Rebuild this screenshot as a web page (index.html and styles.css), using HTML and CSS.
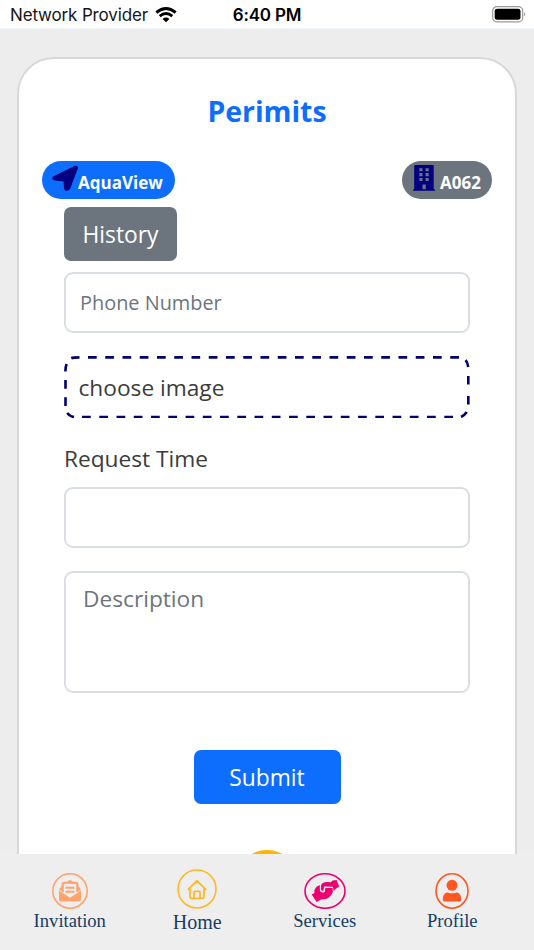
FILE: index.html
```html
<!DOCTYPE html>
<html lang="en">
<head>
<meta charset="utf-8">
<title>Perimits</title>
<link rel="stylesheet" href="styles.css">
</head>
<body>
<div class="screen">
  <header class="status">
    <div class="carrier"><span>Network Provider</span>
      <svg class="wifi" width="22" height="16" viewBox="0 0 22 16"><g fill="none" stroke="#000" stroke-width="2.9"><path d="M1.3 5.5Q11-2.3 20.7 5.5"/><path d="M4.7 9.1Q11 3.9 17.3 9.1"/></g><path d="M7.6 12Q11 9.2 14.4 12L11 15.3Z"/></svg>
    </div>
    <div class="clock">6:40 PM</div>
    <svg class="battery" width="34" height="17" viewBox="0 0 34 17"><rect x=".7" y=".7" width="30" height="15.2" rx="4.2" fill="none" stroke="#999" stroke-width="1.2"/><rect x="2.7" y="2.8" width="25.8" height="11" rx="2.4"/><path d="M32.1 6Q34.4 8.3 32.1 10.6Z" fill="#999"/></svg>
  </header>
  <main class="content">
    <section class="card">
      <h1>Perimits</h1>
      <div class="badges">
        <div class="badge blue">
          <svg width="26" height="27" viewBox="0 0 26 27"><path d="M23 .8C25 .1 26.6 1.7 25.8 3.6L18.2 23.6C17.2 26.6 12.4 26.4 12 23.4L11.6 16.5 3 15.5C-.3 15-.6 12.3 2 11Z" fill="#020080"/></svg>
          <span>AquaView</span>
        </div>
        <div class="badge gray">
          <svg width="22" height="26" viewBox="0 0 22 26"><path fill="#020080" fill-rule="evenodd" d="M1.2.8Q1.2 0 2 0H19.8Q20.7 0 20.7.8V24.3H21.3Q22 24.3 22 25V25.8H0V25Q0 24.3.8 24.3H1.2ZM6.4 3.2V6.3H9.5V3.2ZM12.6 3.2V6.3H15.7V3.2ZM6.4 8.1V11.2H9.5V8.1ZM12.6 8.1V11.2H15.7V8.1ZM6.4 13V16.1H9.5V13ZM12.6 13V16.1H15.7V13ZM9.5 19.5V24.3H12.8V19.5Z"/></svg>
          <span>A062</span>
        </div>
      </div>
      <form class="form">
        <button type="button" class="btn history">History</button>
        <div class="field phone">Phone Number</div>
        <div class="upload">
          <svg width="406" height="62" viewBox="0 0 406 62"><g fill="none" stroke="#020070" stroke-width="2.6"><path d="M7.3 2.2Q9 1.4 15.5 1.4M24 1.4H395" stroke-dasharray="8.7 8.55"/><path d="M401.6 4.2Q403.6 6.5 404.2 11"/><path d="M404.3 20V28.6M404.3 40V48.6M402.8 56Q400.4 59.4 397 61"/><path d="M389 61.1H17" stroke-dasharray="8.7 8.55"/><path d="M10 61.1Q5.5 60.3 3.2 57M1.5 50V41.3M1.5 32.7V24M1.5 15.5Q1.2 12 2.6 8"/></g></svg>
          <span>choose image</span>
        </div>
        <div class="label">Request Time</div>
        <div class="field time"></div>
        <div class="field description">Description</div>
        <button type="button" class="btn submit">Submit</button>
      </form>
      <div class="disc"></div>
    </section>
  </main>
  <nav class="tabs">
    <div class="tab">
      <svg width="36" height="36" viewBox="0 0 36 36"><circle cx="18" cy="18" r="17.2" fill="none" stroke="#ffa36b" stroke-width="1.6"/><path fill="#ffa36b" d="M7 17.6L18 24.8 29 17.6V26.5Q29 28.5 27 28.5H9Q7 28.5 7 26.5ZM7 16.4L10 12.8V18.2ZM29 16.4L26 12.8V18.2Z"/><path d="M10.7 19V11.2Q10.7 9.7 12.2 9.7H23.8Q25.3 9.7 25.3 11.2V19M13.6 14.8H22.4M13.6 18.8H22.4" fill="none" stroke="#ffa36b" stroke-width="2.1"/><path d="M13.6 10.2L17 7.3H19L22.4 10.2Z" fill="#ffa36b"/></svg>
      <span>Invitation</span>
    </div>
    <div class="tab home">
      <svg width="40" height="40" viewBox="0 0 40 40"><circle cx="20" cy="20" r="19" fill="none" stroke="#ffb827" stroke-width="1.6"/><path d="M10.7 20.8L20 11.8 29.3 20.8M13 19V28Q13 29.3 14.3 29.3H25.7Q27 29.3 27 28V19M17 29V23.3Q17 22.3 18 22.3H22Q23 22.3 23 23.3V29" fill="none" stroke="#ffb827" stroke-width="1.8"/></svg>
      <span>Home</span>
    </div>
    <div class="tab">
      <svg width="42" height="36" viewBox="0 0 42 36"><ellipse cx="21" cy="18" rx="20" ry="17.2" fill="none" stroke="#ed006d" stroke-width="1.6"/><path fill="#ed006d" d="M7.7 21.5L10.4 20V17Q12 13.2 15.8 12L15.9 17.8Q17.4 20.6 20.8 19L21.3 15H28.6L28.8 19 27.2 22 25 24.6 22 26 17 26.4 12.6 28.9Z"/><path fill="#ed006d" d="M17 12Q18 9.6 21.7 9L27 9.2 28.5 7.6 32.6 7 35.2 13.6 31.8 15.8 29.5 18 29 13.8 20 13.6 19.5 17.4Q17.4 18.4 17 16.7Z"/></svg>
      <span>Services</span>
    </div>
    <div class="tab">
      <svg width="34" height="36" viewBox="0 0 34 36"><ellipse cx="17" cy="18" rx="16" ry="17.2" fill="none" stroke="#ff5722" stroke-width="1.6"/><circle cx="17" cy="12.3" r="5.5" fill="#ff5722"/><path fill="#ff5722" d="M7.8 26.4C7.8 21.8 10 19.4 12.8 19.4Q17 21.2 21.2 19.4C24.2 19.4 26.2 21.8 26.2 26.4Q26.2 28.5 24.2 28.5H9.8Q7.8 28.5 7.8 26.4Z"/></svg>
      <span>Profile</span>
    </div>
  </nav>
</div>
</body>
</html>
```
FILE: styles.css
```css
* { box-sizing: border-box; }
body { margin: 0; background: #ededed; font-family: "Open Sans", sans-serif; color: #3b3c3d; }
svg { display: block; flex: none; }
.screen { height: 950px; display: flex; flex-direction: column; overflow: hidden; }
.status { height: 29px; flex: none; background: #fff; border-bottom: 1px solid #f0f5f9; display: grid; grid-template-columns: 1fr auto 1fr; align-items: center; padding: 0 8px 0 10px; font-family: Inter, sans-serif; color: #000; font-size: 17px; line-height: 30px; }
.carrier { display: flex; align-items: center; gap: 7px; color: #151515; white-space: nowrap; letter-spacing: -.15px; }
.clock { font-weight: 600; padding-right: 2px; letter-spacing: -.2px; }
.battery { justify-self: end; margin-top: -2px; }
.content { flex: 1; min-height: 0; overflow: hidden; padding: 28px 17px 0; }
.card { height: 900px; border: 2px solid #d8d8d8; border-radius: 37px; background: #fff; padding: 32px 23px 0; }
h1 { margin: 0; font-size: 28.4px; line-height: 40px; font-weight: 700; color: #0d6efd; text-align: center; }
.badges { display: flex; justify-content: space-between; margin-top: 30px; }
.badge { height: 38px; border-radius: 19px; display: flex; color: #fff; font-size: 17px; font-weight: 700; line-height: 43px; }
.blue { width: 133px; background: #0d6efd; padding: 4px 0 0 10px; }
.gray { width: 90px; background: #6c757d; padding: 4px 0 0 11px; gap: 5px; }
.badge span { margin-top: -4px; }
.form { display: flex; flex-direction: column; padding: 0 22px; margin-top: 8px; }
.btn { border: 0; border-radius: 7px; height: 54px; color: #fff; font: 22.8px/54px "Open Sans", sans-serif; padding: 0; }
.history { width: 113px; background: #6c757d; padding-top: 1px; }
.field { border: 2px solid #d9dee2; border-radius: 9px; height: 61px; color: #6c757d; }
.phone { margin-top: 11px; padding-left: 14px; font-size: 19.9px; line-height: 58px; }
.upload { display: grid; margin-top: 23px; height: 62px; }
.upload svg, .upload span { grid-area: 1 / 1; }
.upload span { font-size: 22.7px; line-height: 63px; padding-left: 14.5px; }
.label { font-size: 22.7px; line-height: 32px; margin-top: 25px; }
.time { margin-top: 12px; }
.description { margin-top: 23px; height: 122px; padding: 9px 17px; font-size: 22.7px; line-height: 33px; }
.submit { width: 147px; background: #0d6efd; align-self: center; margin-top: 57px; padding-top: 1px; }
.disc { width: 64px; height: 64px; border-radius: 50%; background: #ffb400; margin: 46px auto 0; }
.tabs { height: 96px; flex: none; background: #eee; display: grid; grid-template-columns: repeat(4, 1fr); padding: 19px 18px 0 6px; font-family: "Liberation Serif", serif; font-size: 18.6px; line-height: 22px; color: #173d65; }
.tab { display: flex; flex-direction: column; align-items: center; gap: 1px; }
.home { margin-top: -4px; font-size: 20px; gap: 2px; }
```
